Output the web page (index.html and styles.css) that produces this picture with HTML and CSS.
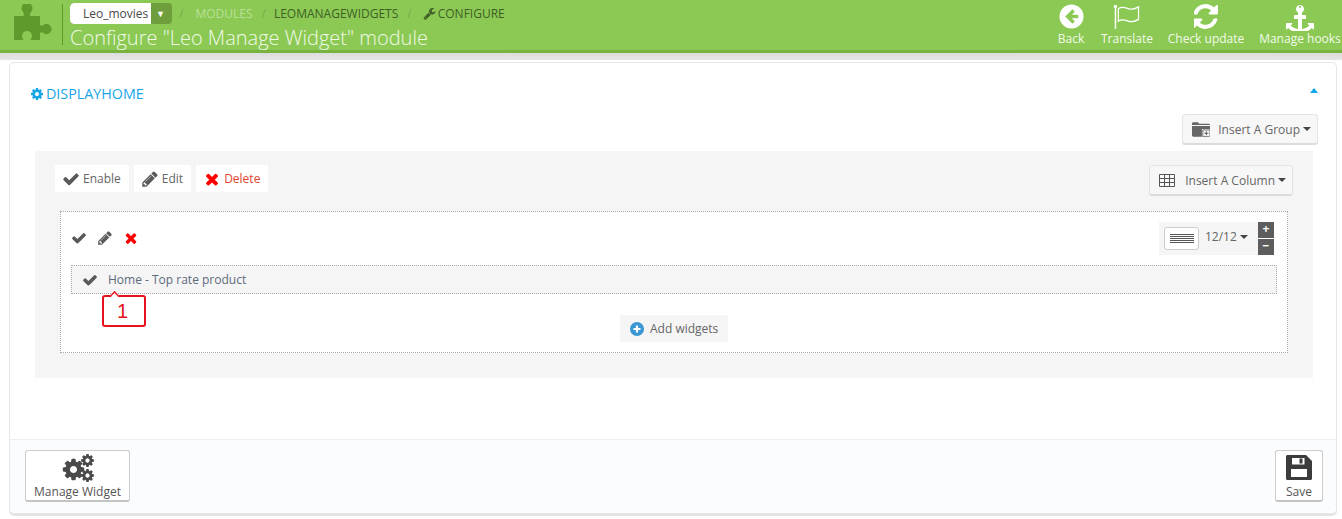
FILE: index.html
```html
<!DOCTYPE html>
<html lang="en">
<head>
<meta charset="utf-8">
<title>Configure Leo Manage Widget</title>
<link rel="stylesheet" href="styles.css">
</head>
<body>
<svg class="defs" width="0" height="0">
  <defs>
    <symbol id="i-check" viewBox="0 0 1792 1792"><path d="M1671 566q0 40-28 68l-724 724-136 136q-28 28-68 28t-68-28l-136-136-362-362q-28-28-28-68t28-68l136-136q28-28 68-28t68 28l294 295 656-657q28-28 68-28t68 28l136 136q28 28 28 68z"/></symbol>
    <symbol id="i-times" viewBox="0 0 1792 1792"><path d="M1490 1322q0 40-28 68l-136 136q-28 28-68 28t-68-28l-294-294-294 294q-28 28-68 28t-68-28l-136-136q-28-28-28-68t28-68l294-294-294-294q-28-28-28-68t28-68l136-136q28-28 68-28t68 28l294 294 294-294q28-28 68-28t68 28l136 136q28 28 28 68t-28 68l-294 294 294 294q28 28 28 68z"/></symbol>
    <symbol id="i-pencil" viewBox="0 0 1792 1792"><path d="M491 1536l91-91-235-235-91 91v107h128v128h107zm523-928q0-22-22-22-10 0-17 7l-542 542q-7 7-7 17 0 22 22 22 10 0 17-7l542-542q7-7 7-17zm-54-192l416 416-832 832h-416v-416zm683 96q0 53-37 90l-166 166-416-416 166-165q36-38 90-38 53 0 91 38l235 234q37 39 37 91z"/></symbol>
    <symbol id="i-cog" viewBox="0 0 1792 1792"><path d="M1152 896q0-106-75-181t-181-75-181 75-75 181 75 181 181 75 181-75 75-181zm512-109v222q0 12-8 23t-20 13l-185 28q-19 54-39 91 35 50 107 138 10 12 10 25t-9 23q-27 37-99 108t-94 71q-12 0-26-9l-138-108q-44 23-91 38-16 136-29 186-7 28-36 28h-222q-14 0-24.500-8.500t-11.500-21.500l-28-184q-49-16-90-37l-141 107q-10 9-25 9-14 0-25-11-126-114-165-168-7-10-7-23 0-12 8-23 15-21 51-66.500t54-70.500q-27-50-41-99l-183-27q-13-2-21-12.500t-8-23.500v-222q0-12 8-23t19-13l186-28q14-46 39-92-40-57-107-138-10-12-10-24 0-10 9-23 26-36 98.500-107.500t94.500-71.500q13 0 26 10l138 107q44-23 91-38 16-136 29-186 7-28 36-28h222q14 0 24.500 8.500t11.500 21.500l28 184q49 16 90 37l142-107q9-9 24-9 13 0 25 10 129 119 165 170 7 8 7 22 0 12-8 23-15 21-51 66.500t-54 70.500q26 50 41 98l183 28q13 2 21 12.500t8 23.500z"/></symbol>
  </defs>
</svg>

<header class="topbar">
  <svg class="puzzle" viewBox="0 0 39 37"><path d="M0 12H9C11 12 10 10 9 8A5.500 5.500 0 1 1 17 8C16 10 15 12 17 12H26V20C26 22 28 22 29.500 21A5 5 0 1 1 29.500 29C28 28 26 28 26 30V36H17C16 36 18 34 18 32A5 5 0 0 0 8 32C8 34 10 36 9 36H0Z"/></svg>
  <div class="heading">
    <div class="crumbs">
      <div class="shop"><span class="shop-name">Leo_movies</span><span class="shop-arrow">▼</span></div>
      <span class="sep sep-first">/</span>
      <span class="crumb-faded">MODULES</span>
      <span class="sep">/</span>
      <span class="crumb">LEOMANAGEWIDGETS</span>
      <span class="sep sep-last">/</span>
      <span class="crumb crumb-wrench"><svg class="wrench" viewBox="0 0 1792 1792"><path d="M448 1472q0-26-19-45t-45-19-45 19-19 45 19 45 45 19 45-19 19-45zm644-420l-682 682q-37 37-90 37-52 0-91-37l-106-108q-38-36-38-90 0-53 38-91l681-681q39 98 114.500 173.500t173.500 114.500zm634-435q0 39-23 106-47 134-164.500 217.500t-258.500 83.500q-185 0-316.500-131.500t-131.500-316.500 131.500-316.500 316.500-131.500q58 0 121.500 16.500t107.500 46.500q16 11 16 28t-16 28l-293 169v224l193 107q5-3 79-48.500t135.500-81 70.500-35.500q15 0 23.500 10t8.500 25z"/></svg>CONFIGURE</span>
    </div>
    <h1 class="title">Configure "Leo Manage Widget" module</h1>
  </div>
  <nav class="toolbar">
    <a class="tool tool-back"><svg class="tool-icon" viewBox="0 0 26 26"><circle cx="13" cy="13" r="12.500" fill="#fff"/><path d="M14 5.500 6.500 13l7.500 7.500 2.500-2.500-3.200-3.200H20v-3.600h-6.700L16.500 8z" fill="#8bc954"/></svg><span>Back</span></a>
    <a class="tool tool-translate"><svg class="tool-icon flag" viewBox="0 0 28 26"><circle cx="2" cy="2.500" r="1.800" fill="#fff"/><path d="M2 3v23" stroke="#fff" stroke-width="1.500" fill="none"/><path d="M5 5c4-3 7-1 11 0 4 1 7 0 10-2v13c-3 2-6 3-10 2-4-1-7-3-11 0z" fill="none" stroke="#fff" stroke-width="1.300"/></svg><span>Translate</span></a>
    <a class="tool tool-update"><svg class="tool-icon" viewBox="256 128 1408 1536" fill="#fff"><path d="M1639 1056q0 5-1 7-64 268-268 434.500t-478 166.500q-146 0-282.500-55t-243.500-157l-129 129q-19 19-45 19t-45-19-19-45v-448q0-26 19-45t45-19h448q26 0 45 19t19 45-19 45l-137 137q71 66 161 102t187 36q134 0 250-65t186-179q11-17 53-117 8-23 30-23h192q13 0 22.500 9.500t9.500 22.500zm25-800v448q0 26-19 45t-45 19h-448q-26 0-45-19t-19-45 19-45l138-138q-148-137-349-137-134 0-250 65t-186 179q-11 17-53 117-8 23-30 23h-199q-13 0-22.500-9.500t-9.500-22.500v-7q65-268 270-434.500t480-166.500q146 0 284 55.500t245 156.500l130-129q19-19 45-19t45 19 19 45z"/></svg><span>Check update</span></a>
    <a class="tool tool-hooks"><svg class="tool-icon" viewBox="0 0 1792 1792" fill="#fff"><path d="M960 256q0-26-19-45t-45-19-45 19-19 45 19 45 45 19 45-19 19-45zm832 1056v352q0 22-20 30-8 2-12 2-12 0-23-9l-93-93q-119 143-318.500 226.500t-429.500 83.500-429.500-83.500-318.500-226.500l-93 93q-9 9-23 9-4 0-12-2-20-8-20-30v-352q0-14 9-23t23-9h352q22 0 30 20 8 19-7 35l-100 100q67 91 189.500 153.500t271.500 82.500v-647h-192q-26 0-45-19t-19-45v-128q0-26 19-45t45-19h192v-163q-58-34-93-92.500t-35-128.500q0-106 75-181t181-75 181 75 75 181q0 70-35 128.500t-93 92.500v163h192q26 0 45 19t19 45v128q0 26-19 45t-45 19h-192v647q149-20 271.500-82.500t189.500-153.500l-100-100q-15-16-7-35 8-20 30-20h352q14 0 23 9t9 23z"/></svg><span>Manage hooks</span></a>
  </nav>
</header>
<div class="shade"></div>

<main class="panel">
  <div class="panel-body">
    <div class="panel-head">
      <h2 class="panel-title"><svg class="ico-cog"><use href="#i-cog"/></svg>DISPLAYHOME</h2>
      <span class="collapse"></span>
    </div>
    <div class="group-actions">
      <button class="btn">
        <svg class="folder" viewBox="0 0 20 16"><path d="M0 3V1.500C0 .7.700 0 1.500 0h5L8 1.500h10.500c.8 0 1.500.7 1.500 1.500z" fill="#666"/><path d="M0 4h20v3.500H11V16H1.500C.7 16 0 15.300 0 14.500z" fill="#666"/><path d="M12 8.500h8v6c0 .8-.7 1.500-1.500 1.500H12z" fill="none" stroke="#666"/><path d="M16 10v4.500M13.800 12.250h4.400" stroke="#666" stroke-width="1.200"/></svg>
        Insert A Group<span class="caret"></span>
      </button>
    </div>
    <section class="group">
      <div class="group-bar">
        <div class="group-tools">
          <a class="chip"><svg class="ico ico-grey"><use href="#i-check"/></svg>Enable</a>
          <a class="chip"><svg class="ico ico-grey"><use href="#i-pencil"/></svg>Edit</a>
          <a class="chip chip-danger"><svg class="ico ico-red"><use href="#i-times"/></svg>Delete</a>
        </div>
        <button class="btn">
          <svg class="table" viewBox="0 0 16 13"><path d="M.5.5h15v12H.5zM.5 4.500h15M.5 8.500h15M5.500.5v12M10.500.5v12" fill="none" stroke="#555"/></svg>
          Insert A Column<span class="caret"></span>
        </button>
      </div>
      <div class="column">
        <div class="column-bar">
          <div class="column-tools">
            <svg class="ico ico-grey"><use href="#i-check"/></svg>
            <svg class="ico ico-grey"><use href="#i-pencil"/></svg>
            <svg class="ico ico-red"><use href="#i-times"/></svg>
          </div>
          <div class="sizer">
            <div class="size-box">
              <span class="size-lines"></span>
              <span class="size-text">12/12<span class="caret"></span></span>
            </div>
            <div class="steps"><span class="step">+</span><span class="step">−</span></div>
          </div>
        </div>
        <div class="widget">
          <svg class="ico ico-grey"><use href="#i-check"/></svg>
          <span class="widget-name">Home - Top rate product</span>
          <div class="callout">1</div>
        </div>
        <div class="add-row">
          <a class="add"><svg class="plus" viewBox="0 0 14 14"><circle cx="7" cy="7" r="7" fill="#3a97d4"/><path d="M7 3.500v7M3.500 7h7" stroke="#fff" stroke-width="2.200"/></svg>Add widgets</a>
        </div>
      </div>
    </section>
  </div>
  <footer class="panel-foot">
    <button class="foot-btn foot-manage">
      <svg class="gears" viewBox="0 0 32 28" fill="#4a4a4a">
        <use href="#i-cog" x="-1" y="3" width="25" height="25"/>
        <use href="#i-cog" x="18" y="-1" width="15" height="15"/>
        <use href="#i-cog" x="18" y="14" width="15" height="15"/>
      </svg>
      <span>Manage Widget</span>
    </button>
    <button class="foot-btn foot-save">
      <svg class="disk" viewBox="0 0 26 25"><path fill="#3c3c3c" fill-rule="evenodd" d="M1.500 0H20l6 6v17.500c0 .8-.7 1.500-1.500 1.500h-23C.7 25 0 24.300 0 23.500v-22C0 .7.700 0 1.500 0zM6 3v6.500h12.500V3zM13.500 3.500H16.500v5H13.500zM5 14v8h16v-8z"/></svg>
      <span>Save</span>
    </button>
  </footer>
</main>
</body>
</html>
```

FILE: styles.css
```css
* { box-sizing: border-box; }
html, body { margin: 0; padding: 0; }
body {
  width: 1342px;
  height: 519px;
  overflow: hidden;
  background: #fff;
  font-family: "Open Sans", "Liberation Sans", sans-serif;
  font-size: 12px;
  color: #666;
}
.defs { display: block; height: 0; }

/* header */
.topbar {
  height: 53px;
  background: #8bc954;
  border-bottom: 3px solid #78b23f;
  display: flex;
  align-items: flex-start;
}
.puzzle { width: 39px; height: 37px; margin: 4px 0 0 14px; fill: #5e9a2c; flex: none; }
.heading {
  margin: 4px 0 0 9px;
  height: 41px;
  border-left: 1px solid #5e9a2c;
  padding-left: 7px;
  flex: none;
}
.crumbs { display: flex; align-items: center; height: 22px; margin-top: -2px; font-size: 12px; }
.shop { display: flex; width: 102px; height: 21px; border-radius: 4px; background: #6f9f3d; overflow: hidden; }
.shop-name {
  width: 81px; background: #fff; color: #4a4a4a;
  padding-left: 13px; line-height: 22px; font-size: 12px;
  border-radius: 4px 0 0 4px;
}
.shop-arrow { flex: 1; color: #fff; font-size: 9px; line-height: 21px; text-align: center; padding-right: 2px; }
.sep { color: #78a94b; margin: 0 8px 0 9px; }
.sep-first { margin: 0 12px 0 7px; }
.sep-last { margin: 0 11px 0 9px; }
.crumb-faded { color: #b9e094; }
.crumb { color: #3f5f25; }
.crumb-wrench { display: flex; align-items: center; }
.wrench { width: 13px; height: 13px; fill: #3f5f25; margin-right: 2px; }
.title {
  margin: 2px 0 0;
  font-size: 20px;
  font-weight: 300;
  line-height: 24px;
  color: #f0f9e6;
  white-space: nowrap;
}
.toolbar { margin-left: auto; margin-right: -2px; display: flex; height: 50px; flex: none; width: 300px; }
.tool { display: flex; flex: none; flex-direction: column; align-items: center; color: #f3fae9; font-size: 12px; white-space: nowrap; padding-top: 4px; }
.tool span { line-height: 16px; margin-top: 2px; }
.tool-icon { width: 25px; height: 25px; display: block; }
.flag { width: 28px; }
.tool-back { width: 54px; }
.tool-translate { width: 58px; }
.tool-update { width: 100px; }
.tool-hooks { width: 88px; }
.tool-hooks .tool-icon { width: 28px; height: 28px; margin-top: -1px; margin-bottom: -2px; }
.shade { height: 7px; background: linear-gradient(#dcdcdc, #e6e6e6); }

/* panel */
.panel {
  margin: 2px 5px 0 9px;
  height: 452px;
  border: 1px solid #e6e6e6;
  border-radius: 5px;
  box-shadow: 0 2px 0 #e4e4e4;
  background: #fff;
  display: flex;
  flex-direction: column;
  overflow: hidden;
}
.panel-body { flex: 1; padding: 21px 23px 0 25px; }
.panel-head { display: flex; justify-content: space-between; align-items: center; height: 19px; }
.panel-title { margin: 0 0 0 -5px; font-size: 14.300px; font-weight: 400; color: #18a6e8; display: flex; align-items: center; line-height: 19px; }
.ico-cog { width: 14px; height: 14px; fill: #18a6e8; margin-right: 2px; }
.collapse { width: 0; height: 0; border: 4px solid transparent; border-top: 0; border-bottom: 5px solid #10a5ea; margin: 0 -5px 6px 0; }
.group-actions { display: flex; justify-content: flex-end; margin: 11px -5px 0 0; height: 37px; }

.btn {
  font: inherit;
  color: #666;
  height: 31px;
  background: #f7f7f7;
  border: 1px solid #e4e4e4;
  border-bottom: 2px solid #dcdcdc;
  border-radius: 3px;
  display: flex;
  align-items: center;
  padding: 0 6px 0 9px;
  font-size: 12px;
  white-space: nowrap;
}
.folder { width: 18px; height: 15px; margin-right: 8px; }
.table { width: 16px; height: 13px; margin-right: 10px; }
.caret { display: inline-block; width: 0; height: 0; border: 4px solid transparent; border-bottom: 0; border-top-color: #444; margin-left: 3px; vertical-align: middle; }

.group { background: #f5f5f5; height: 227px; padding: 14px 20px 0 20px; }
.group-bar { display: flex; justify-content: space-between; align-items: flex-start; height: 46px; }
.group-tools { display: flex; gap: 5px; }
.chip { background: #fff; height: 27px; padding: 0 8px 0 7px; display: flex; align-items: center; color: #666; }
.chip-danger { color: #e2432f; }
.ico { width: 16px; height: 16px; flex: none; }
.chip .ico { width: 18px; height: 18px; margin-right: 3px; }
.ico-grey { fill: #5a5a5a; }
.ico-red { fill: #f00; }

.column { background: #fff; border: 1px dotted #aaa; height: 142px; margin: 0 5px; padding: 0 10px; }
.column-bar { display: flex; justify-content: space-between; align-items: flex-start; height: 53px; }
.column-tools { display: flex; gap: 10px; margin-top: 18px; }
.sizer { display: flex; margin: 10px 3px 0 0; }
.size-box { display: flex; align-items: center; background: #f5f5f5; width: 99px; height: 33px; padding-left: 5px; }
.size-lines {
  width: 35px; height: 23px; border: 1px solid #ccc; border-radius: 3px; background-color: #fff;
  background-image: repeating-linear-gradient(#555 0 1px, #fff 1px 2px);
  background-size: 24px 10px; background-position: center; background-repeat: no-repeat;
}
.size-text { color: #666; margin: 0 0 5px 6px; font-size: 12px; white-space: nowrap; }
.steps { display: flex; flex-direction: column; width: 16px; gap: 1px; }
.step { height: 16px; background: #5d5d5d; color: #fff; font-weight: 700; font-size: 12px; line-height: 14px; text-align: center; }

.widget {
  position: relative;
  height: 29px;
  background: #f5f5f5;
  border: 1px dotted #aaa;
  display: flex;
  align-items: center;
  padding-left: 10px;
  color: #666;
}
.widget-name { margin-left: 10px; color: #5d6a7c; }
.callout {
  position: absolute;
  left: 30px;
  top: 29px;
  width: 44px;
  height: 32px;
  background: #fff;
  border: 2px solid #e8101c;
  border-radius: 3px;
  color: #e8101c;
  font-family: "Liberation Sans", sans-serif;
  font-size: 20px;
  line-height: 28px;
  text-align: center;
  padding-right: 3px;
}
.callout::before {
  content: "";
  position: absolute;
  left: 6px;
  top: -6px;
  width: 7px;
  height: 7px;
  background: #fff;
  border-left: 2px solid #e8101c;
  border-top: 2px solid #e8101c;
  transform: rotate(45deg) scale(.7);
}
.add-row { display: flex; justify-content: center; margin-top: 21px; }
.add { display: flex; align-items: center; background: #f5f5f5; height: 27px; width: 108px; padding-left: 10px; color: #666; }
.plus { width: 14px; height: 14px; margin-right: 6px; }

.panel-foot {
  height: 74px;
  background: #fbfcfe;
  border-top: 1px solid #eee;
  display: flex;
  justify-content: space-between;
  align-items: flex-start;
  padding: 10px 13px 0 15px;
}
.foot-btn {
  font: inherit;
  color: #555;
  height: 52px;
  background: #fff;
  border: 1px solid #ccc;
  border-bottom: 2px solid #c4c4c4;
  border-radius: 3px;
  display: flex;
  flex-direction: column;
  align-items: center;
  justify-content: flex-end;
  padding: 0;
  font-size: 12px;
}
.foot-manage { width: 105px; }
.foot-save { width: 48px; }
.gears { width: 32px; height: 28px; margin-bottom: 1px; }
.disk { width: 26px; height: 25px; margin-bottom: 3px; }
```
